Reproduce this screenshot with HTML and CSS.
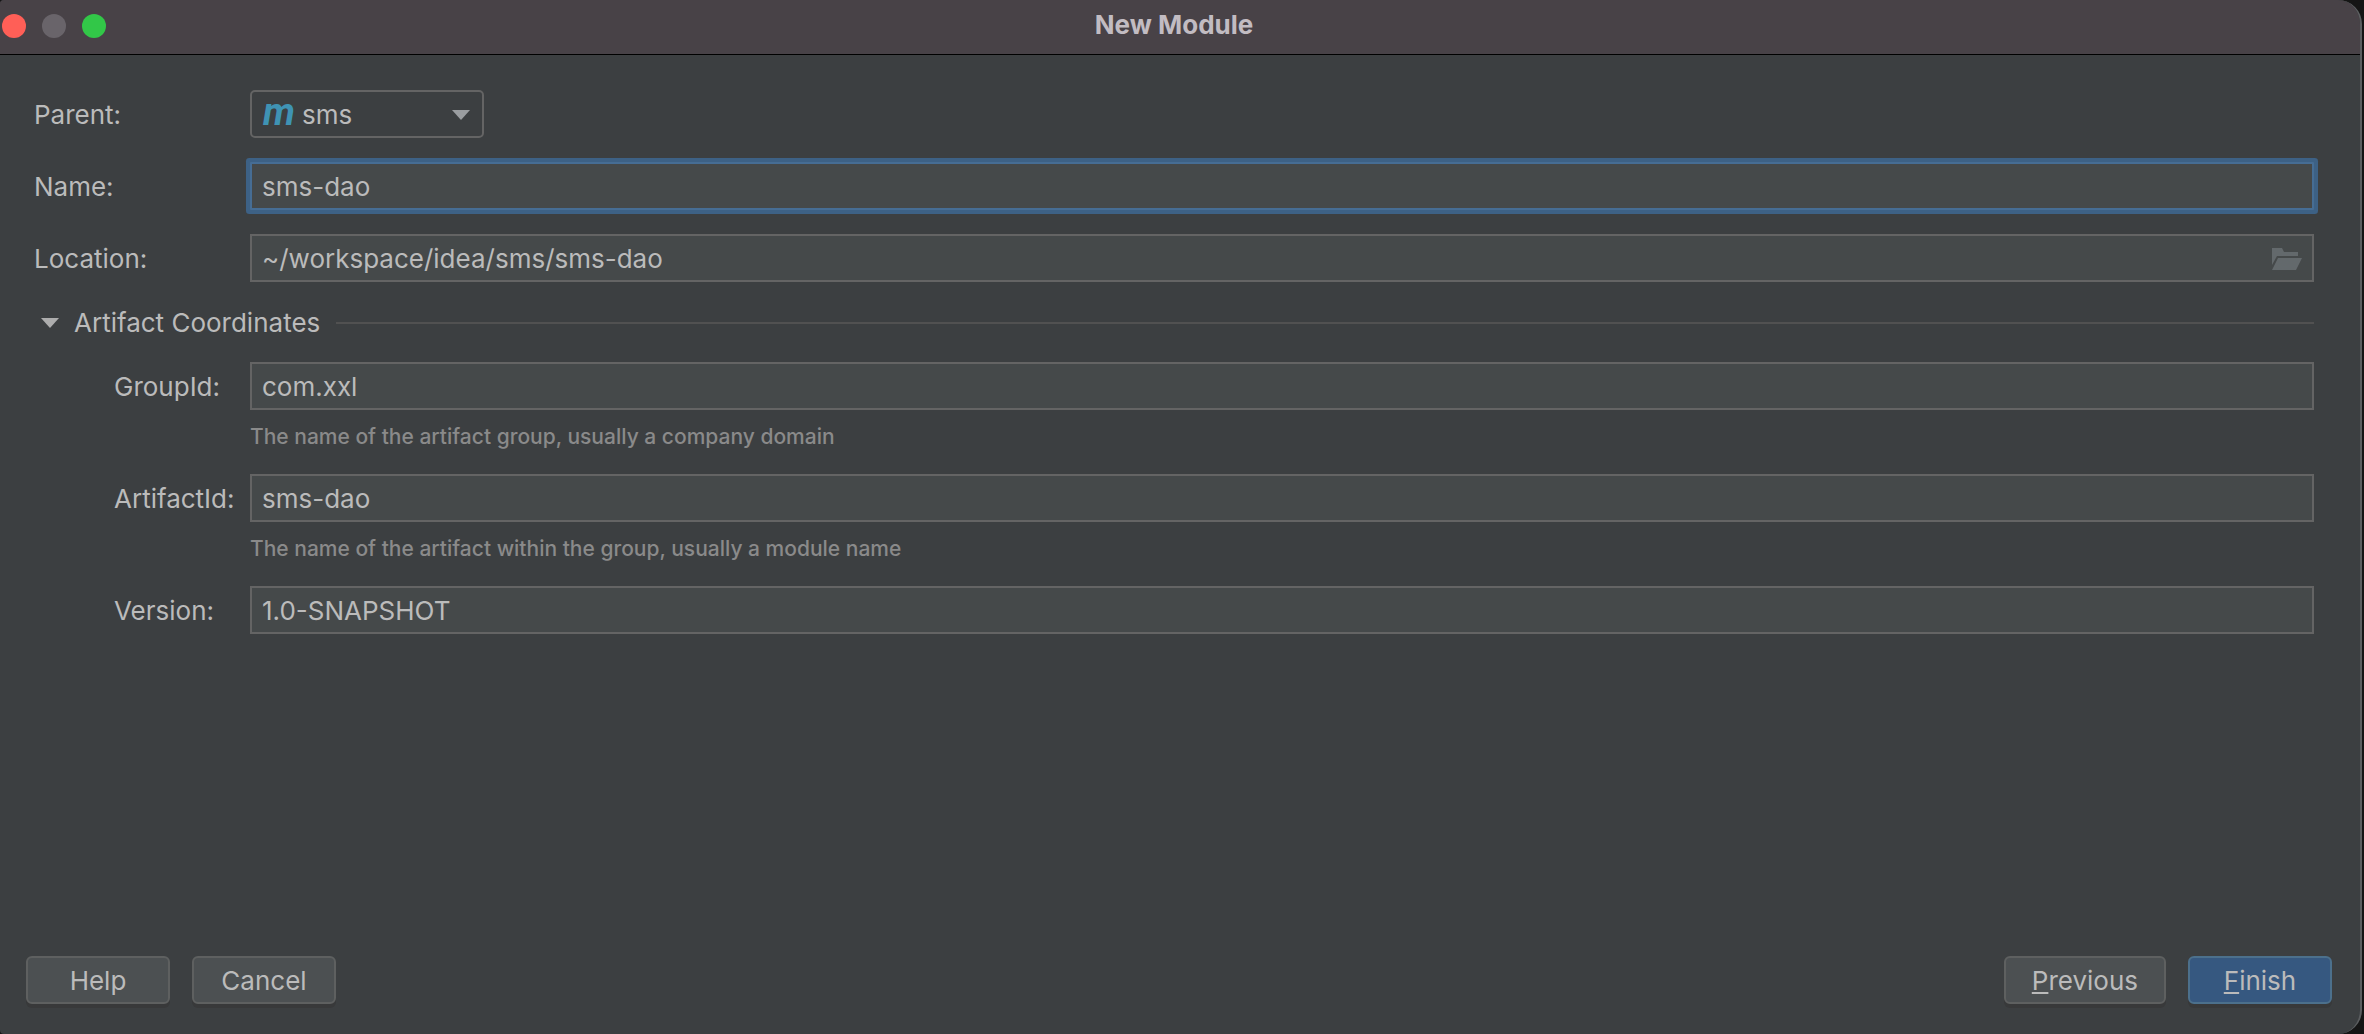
FILE: index.html
```html
<!DOCTYPE html>
<html lang="en">
<head>
  <meta charset="utf-8">
  <title>New Module</title>
  <link rel="stylesheet" href="styles.css">
</head>
<body>
  <main class="window">
    <header class="titlebar">
      <div class="controls">
        <button class="control control--close" type="button" aria-label="Close"></button>
        <button class="control control--minimize" type="button" aria-label="Minimize" disabled></button>
        <button class="control control--zoom" type="button" aria-label="Zoom"></button>
      </div>
      <h1 class="title">New Module</h1>
    </header>

    <form class="form">
      <div class="fields">
        <div class="row">
          <label class="label" for="parent">Parent:</label>
          <div class="combo">
            <select class="combo-select" id="parent">
              <option>sms</option>
            </select>
            <span class="combo-icon" aria-hidden="true">m</span>
            <svg class="combo-arrow" width="18" height="10" viewBox="0 0 18 10" aria-hidden="true"><path d="M0 0h18L9 10z" fill="#9a9da0"/></svg>
          </div>
        </div>

        <div class="row">
          <label class="label" for="name">Name:</label>
          <input class="input input--active" id="name" type="text" value="sms-dao">
        </div>

        <div class="row">
          <label class="label" for="location">Location:</label>
          <div class="input input--browse">
            <input class="browse-text" id="location" type="text" value="~/workspace/idea/sms/sms-dao">
            <button class="browse-button" type="button" aria-label="Browse">
              <svg width="30" height="22" viewBox="0 0 30 22" aria-hidden="true"><path d="M0 0h10l2 4h14v4H5L0 17zM6 10h24l-6 12H0z" fill="#63696c"/></svg>
            </button>
          </div>
        </div>
      </div>

      <details class="section" open>
        <summary class="section-head">
          <svg class="section-arrow" width="18" height="10" viewBox="0 0 18 10" aria-hidden="true"><path d="M0 0h18L9 10z" fill="#adadad"/></svg>
          <span>Artifact Coordinates</span>
          <span class="section-line"></span>
        </summary>

        <div class="section-body">
          <div class="row">
            <label class="label label--nested" for="group">GroupId:</label>
            <input class="input" id="group" type="text" value="com.xxl" aria-describedby="group-hint">
            <p class="hint" id="group-hint">The name of the artifact group, usually a company domain</p>
          </div>
          <div class="row">
            <label class="label label--nested" for="artifact">ArtifactId:</label>
            <input class="input" id="artifact" type="text" value="sms-dao" aria-describedby="artifact-hint">
            <p class="hint" id="artifact-hint">The name of the artifact within the group, usually a module name</p>
          </div>
          <div class="row">
            <label class="label label--nested" for="version">Version:</label>
            <input class="input" id="version" type="text" value="1.0-SNAPSHOT">
          </div>
        </div>
      </details>
    </form>

    <footer class="footer">
      <button class="button" type="button">Help</button>
      <button class="button" type="button">Cancel</button>
      <span class="spacer"></span>
      <button class="button" type="button"><span class="mnemonic">P</span>revious</button>
      <button class="button button--primary" type="button"><span class="mnemonic">F</span>inish</button>
    </footer>
  </main>
</body>
</html>
```

FILE: styles.css
```css
* {
  box-sizing: border-box;
}

body {
  margin: 0;
  background: #151515;
  color: #bbbbbb;
  font: 26px/32px Inter, "Liberation Sans", sans-serif;
}

button,
input,
select {
  margin: 0;
  color: inherit;
  font: inherit;
}

.window {
  display: flex;
  flex-direction: column;
  min-height: 100vh;
  margin-right: 2px;
  overflow: hidden;
  border-right: 2px solid #5c5e60;
  border-radius: 4px 24px 24px 4px;
  background: #3c3f41;
}

/* Title bar */
.titlebar {
  display: grid;
  grid-template-columns: 1fr auto 1fr;
  align-items: start;
  height: 55px;
  padding: 14px 14px 0 2px;
  border-bottom: 1px solid #000000;
  background: #484247;
}

.controls {
  display: flex;
  gap: 16px;
}

.control {
  width: 24px;
  height: 24px;
  padding: 0;
  border: 0;
  border-radius: 50%;
}

.control--close {
  background: #ff5f57;
}

.control--minimize {
  background: #69646a;
}

.control--zoom {
  background: #32c748;
}

.title {
  margin: 0;
  color: #c2bcc2;
  font-size: 26px;
  font-weight: 700;
  line-height: 22px;
}

/* Form */
.form {
  flex: 1;
  padding: 35px 46px 0 34px;
}

.fields {
  display: grid;
  gap: 24px;
}

.row {
  display: grid;
  grid-template-columns: 216px 1fr;
  align-items: center;
}

.label {
  padding-top: 2px;
}

.label--nested {
  padding-left: 80px;
}

.input {
  width: 100%;
  height: 48px;
  padding: 0 10px;
  border: 2px solid #646464;
  border-radius: 0;
  outline: 0;
  background: #45494a;
}

.input--active {
  border-color: #466d94;
  border-radius: 1px;
  box-shadow: 0 0 0 4px #3d6185;
}

.input--browse {
  display: flex;
  align-items: center;
}

.browse-text {
  flex: 1;
  padding: 2px 0 0;
  border: 0;
  outline: 0;
  background: none;
}

.browse-button {
  display: flex;
  padding: 2px 0 0;
  border: 0;
  background: none;
}

.combo {
  position: relative;
  width: 234px;
}

.combo-select {
  width: 100%;
  height: 48px;
  padding: 2px 40px 0 50px;
  border: 2px solid #646464;
  border-radius: 5px;
  appearance: none;
  background: #3c3f41;
}

.combo-icon {
  position: absolute;
  top: 6px;
  left: 13px;
  color: #3f93b4;
  font: italic 700 38px/32px Roboto, sans-serif;
  pointer-events: none;
}

.combo-arrow {
  position: absolute;
  top: 20px;
  right: 14px;
  pointer-events: none;
}

.hint {
  grid-column: 2;
  margin: 0;
  padding-top: 14px;
  color: #8a8a8a;
  font-size: 21px;
  font-weight: 500;
  line-height: 26px;
}

/* Collapsible section */
.section {
  padding-top: 25px;
}

.section-head {
  display: flex;
  align-items: center;
  padding-left: 7px;
  list-style: none;
}

.section-arrow {
  margin-right: 15px;
}

.section-line {
  flex: 1;
  height: 2px;
  margin-left: 16px;
  background: #515151;
}

.section-body {
  display: grid;
  gap: 24px;
  padding-top: 23px;
}

/* Footer */
.footer {
  display: flex;
  gap: 22px;
  padding: 24px 28px 30px 26px;
}

.spacer {
  flex: 1;
}

.button {
  min-width: 144px;
  height: 48px;
  padding: 2px 26px 0;
  border: 2px solid #5e6060;
  border-radius: 6px;
  background: #4c5052;
  box-shadow: 0 4px 0 #38393a;
}

.button--primary {
  border-color: #4c708c;
  background: #365880;
}

.mnemonic {
  text-decoration: underline;
  text-decoration-thickness: 2px;
  text-underline-offset: 2px;
}
```
